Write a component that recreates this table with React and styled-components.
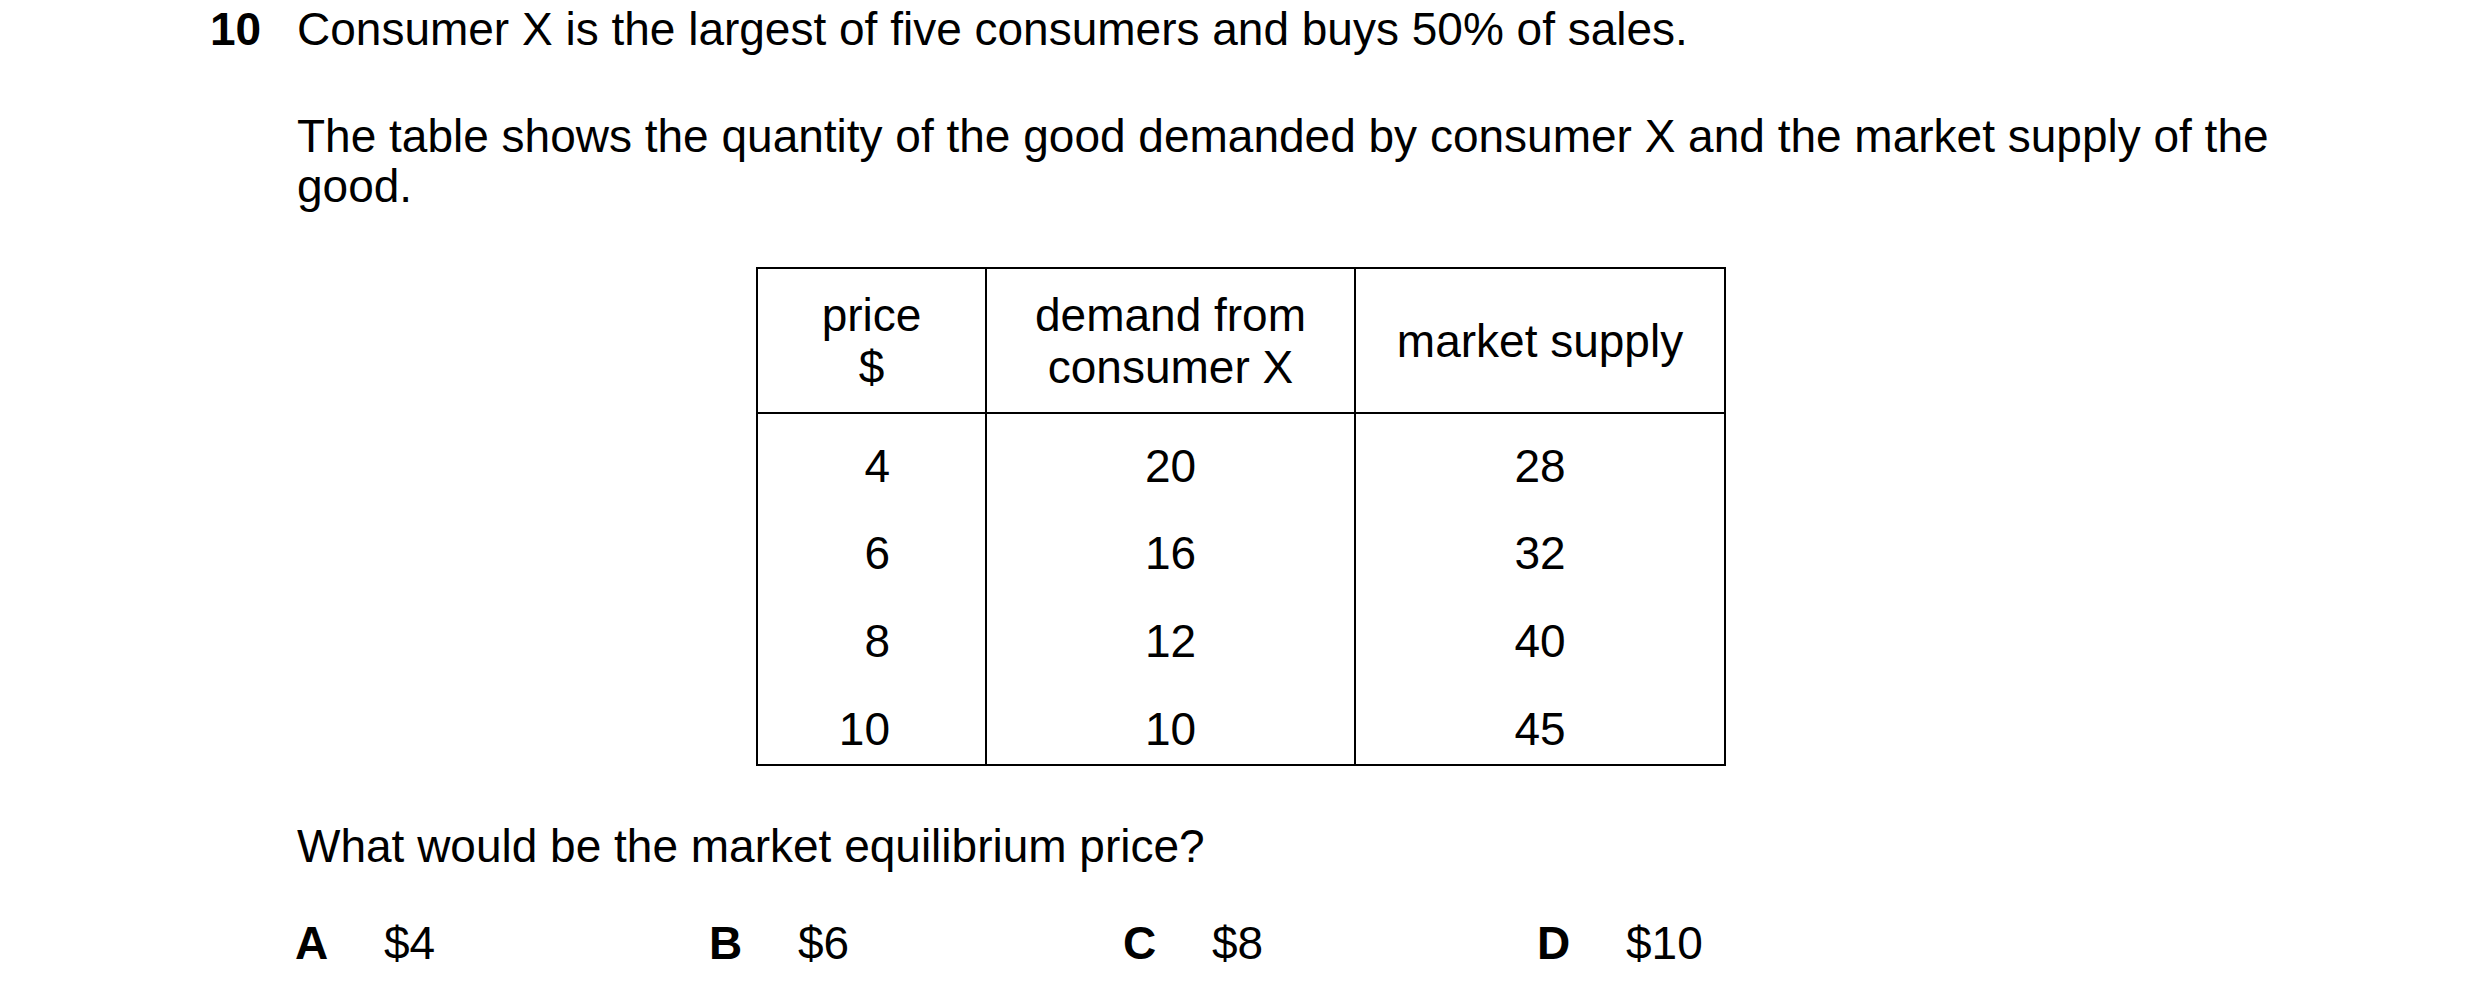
import React from "react";
import styled, { createGlobalStyle } from "styled-components";

const GlobalStyle = createGlobalStyle`
  html, body {
    margin: 0;
    padding: 0;
    background: #fff;
  }
  body {
    font-family: "Liberation Sans", Arial, sans-serif;
    color: #000;
  }
`;

const Page = styled.div`
  width: 2480px;
  height: 1003px;
  box-sizing: border-box;
  padding: 4px 0 0 210px;
  font-size: 46px;
  line-height: 50px;
`;

const Question = styled.div`
  display: grid;
  grid-template-columns: 87px 1fr;
`;

const Number = styled.div`
  font-weight: 700;
`;

const Body = styled.div`
  display: flex;
  flex-direction: column;
`;

const Para = styled.p`
  margin: 0;
  margin-top: ${(p) => p.gap || 0}px;
  width: ${(p) => (p.wrap ? "2000px" : "auto")};
`;

const Table = styled.table`
  border-collapse: collapse;
  margin: 56px 0 0 459px;
  table-layout: fixed;
  width: 968px;
  font-size: 46px;

  th,
  td {
    border: 2px solid #000;
    padding: 0;
  }
`;

const HeadCell = styled.th`
  height: 143px;
  font-weight: 400;
  line-height: 52px;
  text-align: center;
  vertical-align: middle;
`;

const Cell = styled.td`
  height: 88px;
  box-sizing: border-box;
  vertical-align: top;
  line-height: 50px;
  padding-top: 27px !important;
  text-align: ${(p) => (p.right ? "right" : "center")};
  padding-right: ${(p) => (p.right ? "95px" : "0")} !important;
  border-top: none !important;
  border-bottom: ${(p) => (p.last ? "2px solid #000" : "none")} !important;
`;

const Options = styled.div`
  display: flex;
  margin-top: 47px;
  margin-left: -2px;
`;

const Option = styled.div`
  display: flex;
  width: 414px;
`;

const Letter = styled.span`
  font-weight: 700;
  width: 89px;
`;

const rows = [
  ["4", "20", "28"],
  ["6", "16", "32"],
  ["8", "12", "40"],
  ["10", "10", "45"],
];

const options = [
  ["A", "$4"],
  ["B", "$6"],
  ["C", "$8"],
  ["D", "$10"],
];

export default function App() {
  return (
    <>
      <GlobalStyle />
      <Page>
        <Question>
          <Number>10</Number>
          <Body>
            <Para>
              Consumer X is the largest of five consumers and buys 50% of
              sales.
            </Para>
            <Para gap={57} wrap>
              The table shows the quantity of the good demanded by consumer X
              and the market supply of the good.
            </Para>
            <Table>
              <colgroup>
                <col style={{ width: 229 }} />
                <col style={{ width: 369 }} />
                <col style={{ width: 370 }} />
              </colgroup>
              <thead>
                <tr>
                  <HeadCell>
                    price
                    <br />$
                  </HeadCell>
                  <HeadCell>
                    demand from
                    <br />
                    consumer X
                  </HeadCell>
                  <HeadCell>market supply</HeadCell>
                </tr>
              </thead>
              <tbody>
                {rows.map((r, i) => (
                  <tr key={i}>
                    <Cell right last={i === rows.length - 1}>
                      {r[0]}
                    </Cell>
                    <Cell last={i === rows.length - 1}>{r[1]}</Cell>
                    <Cell last={i === rows.length - 1}>{r[2]}</Cell>
                  </tr>
                ))}
              </tbody>
            </Table>
            <Para gap={55}>What would be the market equilibrium price?</Para>
            <Options>
              {options.map(([l, v]) => (
                <Option key={l}>
                  <Letter>{l}</Letter>
                  <span>{v}</span>
                </Option>
              ))}
            </Options>
          </Body>
        </Question>
      </Page>
    </>
  );
}
